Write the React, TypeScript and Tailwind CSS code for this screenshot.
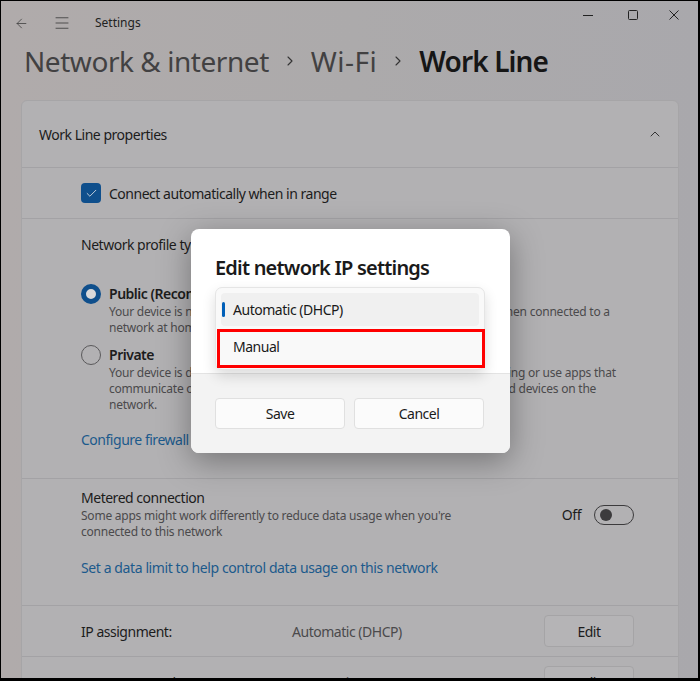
import React from "react";
import { ArrowLeft, Menu, ChevronRight, ChevronUp, Check } from "lucide-react";

const font = { fontFamily: '"Noto Sans", "Open Sans", sans-serif', letterSpacing: "-0.03em" };

function Sep() {
  return <div className="h-px bg-[#a3a2a5]" />;
}

export default function App() {
  return (
    <div
      className="relative w-[700px] h-[681px] overflow-hidden border-t border-l border-r-2 border-b-[3px] border-black bg-gradient-to-r from-[#b0abab] via-[#acaaab] to-[#a9a8ac] text-[#1c1c1c]"
      style={font}
    >
      {/* Title bar */}
      <div className="flex h-[44px] items-start">
        <div className="flex items-center h-[44px] pl-[13px]">
          <ArrowLeft size={15} strokeWidth={1.2} className="text-[#3a3a3a]" />
          <Menu size={18} strokeWidth={1.1} className="ml-[24px] text-[#3a3a3a]" />
          <span className="ml-[24px] text-[12px] text-[#222] tracking-normal">Settings</span>
        </div>
        <div className="ml-auto flex items-center h-[28px] pr-[18px]">
          <svg width="12" height="12" viewBox="0 0 12 12"><path d="M1 6.5h10" stroke="#222" strokeWidth="1" /></svg>
          <svg width="12" height="12" viewBox="0 0 12 12" className="ml-[33px]"><rect x="1.5" y="1.5" width="9" height="9" rx="1" fill="none" stroke="#222" strokeWidth="1" /></svg>
          <svg width="12" height="12" viewBox="0 0 12 12" className="ml-[29px]"><path d="M1.5 1.5l9 9M10.5 1.5l-9 9" stroke="#222" strokeWidth="1" /></svg>
        </div>
      </div>

      {/* Breadcrumb */}
      <div className="flex items-center h-[38px] -mt-[3px] pl-[23px] text-[28px] leading-[38px] tracking-[-0.45px]">
        <span className="text-[#424142]">Network &amp; internet</span>
        <ChevronRight size={16} strokeWidth={1.6} className="mx-[13px] text-[#333]" />
        <span className="text-[#424142] tracking-[0.5px]">Wi-Fi</span>
        <ChevronRight size={16} strokeWidth={1.6} className="mx-[13px] text-[#333]" />
        <span className="font-semibold text-[#161616] tracking-[-0.9px]">Work Line</span>
      </div>

      {/* Card */}
      <div className="mt-[20px] ml-[20px] w-[658px] rounded-t-[6px] border border-[#a6a5a7] bg-[#b2b1b3]">
        <div className="flex items-center h-[66px] pl-[17px] pr-[15px]">
          <span className="text-[14px]">Work Line properties</span>
          <ChevronUp size={16} strokeWidth={1.4} className="ml-auto text-[#2a2a2a]" />
        </div>
        <Sep />
        <div className="flex items-center h-[50px] pl-[59px]">
          <div className="w-[20px] h-[20px] rounded-[4px] bg-[#0f4f8c] flex items-center justify-center">
            <Check size={13} strokeWidth={1.6} className="text-[#d8dde4]" />
          </div>
          <span className="ml-[8px] text-[14px]">Connect automatically when in range</span>
        </div>
        <Sep />
        <div className="h-[259px] pl-[59px] pt-[16px]">
          <div className="text-[14px] leading-[20px]">Network profile type</div>
          <div className="flex mt-[29px]">
            <div className="w-[20px] h-[20px] rounded-full border-[5px] border-[#0f4f8c] bg-[#d9d9da] shrink-0" />
            <div className="ml-[8px]">
              <div className="text-[14px] leading-[20px] font-semibold">Public (Recommended)</div>
              <div className="text-[12px] leading-[16px] text-[#4b4a4c] whitespace-nowrap tracking-[-0.23px]">
                Your device is not discoverable on the network. Use this in most cases—when connected to a<br />
                network at home, work, or in a public place.
              </div>
            </div>
          </div>
          <div className="flex mt-[9px]">
            <div className="w-[20px] h-[20px] rounded-full border border-[#5a595b] shrink-0" />
            <div className="ml-[8px]">
              <div className="text-[14px] leading-[20px] font-semibold">Private</div>
              <div className="text-[12px] leading-[16px] text-[#4b4a4c] whitespace-nowrap tracking-[-0.23px]">
                Your device is discoverable on the network. Select this if you need file sharing or use apps that<br />
                communicate over this network. You should know and trust the people and devices on the<br />
                network.
              </div>
            </div>
          </div>
          <div className="mt-[16px] text-[14px] text-[#1c5a8c]">Configure firewall and security settings</div>
        </div>
        <Sep />
        <div className="h-[126px] pl-[59px] pr-[44px] pt-[9px]">
          <div className="flex items-start">
            <div>
              <div className="text-[14px] leading-[20px]">Metered connection</div>
              <div className="text-[12px] leading-[16px] text-[#4b4a4c] whitespace-nowrap tracking-[-0.23px]">
                Some apps might work differently to reduce data usage when you're<br />
                connected to this network
              </div>
            </div>
            <div className="ml-auto flex items-center mt-[16px]">
              <span className="text-[14px] mr-[13px]">Off</span>
              <div className="w-[40px] h-[20px] rounded-full border border-[#3c3b3d] flex items-center pl-[5px]">
                <div className="w-[12px] h-[12px] rounded-full bg-[#3c3b3d]" />
              </div>
            </div>
          </div>
          <div className="mt-[17px] text-[14px] text-[#1c5a8c] tracking-[-0.4px]">Set a data limit to help control data usage on this network</div>
        </div>
        <Sep />
        <div className="flex items-center h-[50px] pl-[59px] pr-[44px]">
          <span className="w-[211px] text-[14px]">IP assignment:</span>
          <span className="text-[14px] text-[#4b4a4c]">Automatic (DHCP)</span>
          <div className="ml-auto w-[90px] h-[32px] rounded-[4px] border border-[#a5a4a6] bg-[#b5b4b6] flex items-center justify-center text-[14px]">Edit</div>
        </div>
        <Sep />
        <div className="flex items-center h-[50px] pl-[59px] pr-[44px]">
          <span className="w-[211px] text-[14px]">DNS server assignment:</span>
          <span className="text-[14px] text-[#4b4a4c]">Automatic (DHCP)</span>
          <div className="ml-auto w-[90px] h-[32px] rounded-[4px] border border-[#a5a4a6] bg-[#b5b4b6] flex items-center justify-center text-[14px]">Edit</div>
        </div>
      </div>

      {/* Dialog */}
      <div className="absolute left-[190px] top-[228px] w-[319px] h-[224px] rounded-[8px] bg-white shadow-[0_8px_32px_rgba(0,0,0,0.35)] flex flex-col">
        <div className="h-[144px] px-[24px] pt-[25px]">
          <div className="text-[20px] leading-[28px] font-semibold text-[#1a1a1a] tracking-[-0.8px]">Edit network IP settings</div>
        </div>
        <div className="flex-1 rounded-b-[8px] bg-[#f3f3f3] border-t border-[#e3e3e3] px-[24px] pt-[24px] flex gap-[9px]">
          <div className="w-[130px] h-[31px] rounded-[4px] border border-[#e0e0e0] bg-[#fbfbfb] flex items-center justify-center text-[14px] text-[#1a1a1a]">Save</div>
          <div className="w-[130px] h-[31px] rounded-[4px] border border-[#e0e0e0] bg-[#fbfbfb] flex items-center justify-center text-[14px] text-[#1a1a1a]">Cancel</div>
        </div>

        {/* Dropdown popup */}
        <div className="absolute left-[24px] top-[58px] w-[270px] h-[83px] rounded-[7px] border border-[#e5e5e5] bg-[#f9f9f9] shadow-[0_6px_14px_rgba(0,0,0,0.14)] p-[5px]">
          <div className="relative h-[33px] rounded-[4px] bg-[#f0f0f0] flex items-center pl-[12px] text-[14px] text-[#1a1a1a]">
            <div className="absolute left-[1px] top-[9px] w-[3px] h-[15px] rounded-full bg-[#005fb8]" />
            Automatic (DHCP)
          </div>
          <div className="h-[38px] flex items-center pl-[12px] pt-[2px] text-[14px] text-[#1a1a1a]">Manual</div>
          <div className="absolute left-[1px] top-[41px] w-[268px] h-[39px] border-[3px] border-[#ff0000]" />
        </div>
      </div>
    </div>
  );
}
